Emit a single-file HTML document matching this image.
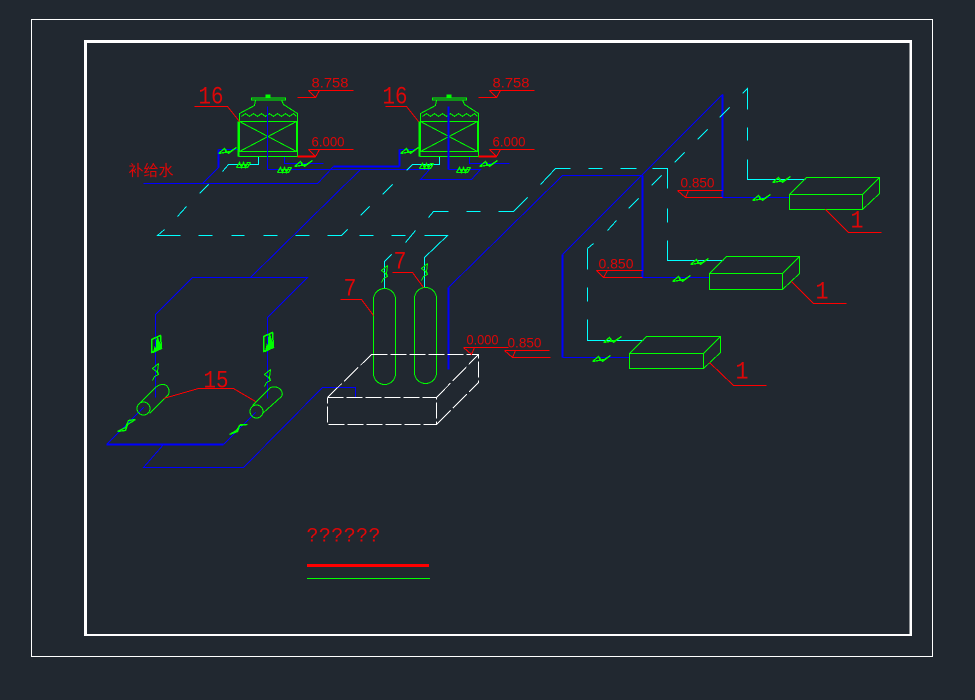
<!DOCTYPE html>
<html>
<head>
<meta charset="utf-8">
<style>
html,body{margin:0;padding:0;background:#212830;width:975px;height:700px;overflow:hidden}
svg{display:block}
text{font-family:"Liberation Mono","Liberation Sans",monospace;fill:#f00}
.n{font-family:"Liberation Sans",sans-serif;font-size:14px;fill-opacity:.85}
.b{font-size:25px;fill-opacity:.85}
.k{stroke:#00f;fill:none}
.t{stroke-width:2}
.c{stroke:#0ff;fill:none}
.g{stroke:#0f0;fill:none}
.r{stroke:#f00;fill:none}
.w{stroke:#fff;fill:none}
</style>
</head>
<body>
<svg width="975" height="700" viewBox="0 0 975 700" xmlns="http://www.w3.org/2000/svg" shape-rendering="crispEdges">
<defs>
<g id="v"><path class="g" stroke-width="1.3" d="M-9 3L-3-2L-1 2L3 1L9-3M-9 3L3 1M-3-2L1 3L9-3"/></g>
<g id="d"><path class="g" stroke-width="1.3" d="M-7 3L-4-2L-2 3L0-2L2 3L4-2L7-2M-7 3L4 3L7-2M-4 0L5 0"/></g>
<g id="tw">
<path class="g" d="M251 97.5H285V99.5H251ZM255 99.5L254 105L239 113V121M281 99.5L283 104L297 113V156"/>
<rect x="265" y="94" width="5" height="3.5" fill="#0f0"/>
<path class="g" d="M241 116L245 113L249 116L253 113L257 116L261 113L265 116L269 113L273 116L277 113L281 116L285 113L289 116L293 113L296 116"/>
<path class="g" d="M239 121H296V151H239ZM239 121L296 151M296 121L239 151"/>
<path class="g" d="M238 121V156" stroke-width="2"/>
<path class="g" d="M238 156H297M238 151H297"/>
</g>
<g id="cv"><path class="g" d="M3 0L-3 5L1 8L3 11L-1 13L-3 17M3 0L2 8L3 11"/></g>
</defs>

<rect x="31.5" y="19.5" width="901" height="637" fill="none" stroke="#fff"/>
<rect x="84" y="40" width="828" height="3" fill="#fff"/>
<rect x="84" y="634" width="828" height="2" fill="#fff"/>
<rect x="84" y="40" width="3" height="596" fill="#fff"/>
<rect x="909.5" y="40" width="2.5" height="596" fill="#fff"/>

<g transform="translate(.5 .5)">
<!-- blue pipes -->
<path class="k t" d="M448 287V369M642 175V277M722 94V197M562 254V357M333 166H399M399 166V149M218 149V167M106 444H223"/>
<path class="k" d="M143 183H317L333 166M218 167L202 183M218 149H239M399 149H416M267 169H429L420 179H471L480 169H448M284 156V163H323M469 156V163H509"/>
<path class="k" d="M360 169L250 277M192 277H307L267 317V398M192 277L155 314V397M106 444L143 407M223 444L255 412"/>
<path class="k" d="M163 444L143 467H243L322 387H355V397"/>
<path class="k" d="M722 94L562 254M642 175H562L448 287M642 277H709M722 197H789M562 357H629"/>

<!-- cyan pipes -->
<path class="c" d="M258 156V164H228L222 171M208 184L199 193M186 206L177 216M164 229L157 235H180M198 235H212M231 235H244M263 235H277M295 235H309M327 235H341L347 229M359 235H373M391 235H405M405 242L415 230M424 235H447L424 257V287M391 254L384 261V288"/>
<path class="c" d="M439 156V164H412L406 170M382 194L392 184M360 215L369 206"/>
<path class="c" d="M428 217L433 211H448M466 211H480M498 211H513L527 197M540 184L555 168H570M588 168H602M620 168H636M652 168H667V188M667 208V222M667 240V260H723"/>
<path class="c" d="M651 185L661 175M674 162L684 152M697 139L707 129M719 117L729 107M742 93L747 88V109M747 127V140M747 159V179H805"/>
<path class="c" d="M628 208L638 198M607 230L616 220M587 248L593 243M587 248V269M587 287V301M587 319V340H643"/>

<!-- towers -->
<use href="#tw"/>
<use href="#tw" x="181"/>
<path class="k" d="M267 106V169"/>
<path class="k t" d="M448 106V169"/>

<!-- valves -->
<use href="#v" x="227" y="150"/><use href="#d" x="243" y="164"/><use href="#v" x="303" y="163"/><use href="#d" x="284" y="169"/>
<use href="#v" x="409" y="150"/><use href="#d" x="426" y="165"/><use href="#v" x="488" y="163"/><use href="#d" x="463" y="169"/>
<use href="#v" x="781" y="179"/><use href="#v" x="761" y="197"/><use href="#v" x="699" y="261"/><use href="#v" x="681" y="278"/><use href="#v" x="612" y="339"/><use href="#v" x="601" y="358"/>
<path class="g" stroke-width="1.3" d="M117 431L125 430L127 424L135 419L128 420L125 427ZM229 434L237 431L239 425L247 424L240 424L236 430Z"/>

<!-- tower labels -->
<text class="b" x="198" y="103" textLength="25" lengthAdjust="spacingAndGlyphs">16</text>
<text class="b" x="382" y="103" textLength="25" lengthAdjust="spacingAndGlyphs">16</text>
<text class="n" x="311" y="87" textLength="37" lengthAdjust="spacingAndGlyphs">8.758</text>
<text class="n" x="492" y="87" textLength="37" lengthAdjust="spacingAndGlyphs">8.758</text>
<text class="n" x="311" y="146" textLength="33" lengthAdjust="spacingAndGlyphs">6.000</text>
<text class="n" x="492" y="146" textLength="33" lengthAdjust="spacingAndGlyphs">6.000</text>
<path class="r" d="M194 106H227L239 121M385 106H406L418 121"/>
<path class="r" d="M297 97H315L308 90M319 90L315 97M308 90H353M478 97H496L489 90M500 90L496 97M489 90H534"/>
<path class="r" d="M308 149L315 156L319 149M308 149H353M489 149L496 156L500 149M489 149H534"/>
<path class="r t" d="M297 156H315M478 156H496"/>
<text x="128" y="175" style="font-family:'Noto Sans CJK SC',sans-serif;font-size:15px;fill-opacity:.85" textLength="45" lengthAdjust="spacing">补给水</text>

<!-- pumps -->
<circle class="g" cx="143" cy="408" r="6.5"/>
<path class="g" d="M138 404L155 387Q161 382 166 385Q170 389 168 394L149 413"/>
<circle class="g" cx="256" cy="411" r="6.5"/>
<path class="g" d="M252 405L270 387Q276 385 280 389Q283 393 281 396L262 413"/>
<path class="r" d="M163 398L198 388H233L255 401"/>
<text class="b" x="203" y="387" textLength="25" lengthAdjust="spacingAndGlyphs">15</text>
<use href="#cv" x="155" y="363"/>
<use href="#cv" x="267" y="369"/>
<path class="g" stroke-width="1.5" d="M151 339L160 335L161 348L151 352Z"/>
<path d="M157 337L153 352L161 348Z" fill="#0f0" stroke="#0f0"/>
<path d="M269 333L265 351L273 347Z" fill="#0f0" stroke="#0f0"/>
<path class="g" stroke-width="1.5" d="M263 336L272 332L273 347L263 351Z"/>
<path class="k" d="M155 341V347M267 337V344"/>

<!-- tanks -->
<rect class="g" x="373" y="288" width="22" height="96" rx="11" ry="11"/>
<rect class="g" x="414" y="287" width="22" height="96" rx="11" ry="11"/>
<use href="#cv" x="384" y="265"/>
<use href="#cv" x="424" y="263"/>
<text class="b" x="343" y="295" textLength="13" lengthAdjust="spacingAndGlyphs">7</text>
<text class="b" x="393" y="268" textLength="13" lengthAdjust="spacingAndGlyphs">7</text>
<path class="r" d="M340 299H361L373 315M392 272H412L423 287"/>

<!-- white dashed base -->
<path class="w" stroke-dasharray="16 3" d="M371 354H478V382M327 397H436V424H327V397"/>
<path class="w" stroke-dasharray="20 3" d="M327 397L371 354M436 397L478 354M436 424L478 382"/>

<!-- elevation labels -->
<text class="n" x="466" y="344" textLength="32" lengthAdjust="spacingAndGlyphs">0.000</text>
<path class="r" d="M463 347H508M463 347L471 354L474 347"/>
<text class="n" x="507" y="347" textLength="34" lengthAdjust="spacingAndGlyphs">0.850</text>
<path class="r" d="M504 350H549M504 350L512 357H550M512 357L515 350"/>
<text class="n" x="680" y="187" textLength="34" lengthAdjust="spacingAndGlyphs">0.850</text>
<path class="r" d="M677 190H722M677 190L685 197H722M685 197L688 190"/>
<text class="n" x="598" y="268" textLength="35" lengthAdjust="spacingAndGlyphs">0.850</text>
<path class="r" d="M596 270H642M596 270L603 277H642M603 277L607 270"/>

<!-- green units -->
<path class="g" d="M789 194H862V209H789ZM789 194L806 177H879V193L862 209M862 194L879 177"/>
<path class="r" d="M825 209L848 232H881"/>
<text class="b" x="850" y="227" textLength="13" lengthAdjust="spacingAndGlyphs">1</text>
<path class="g" d="M709 273H782V289H709ZM709 273L726 256H799V273L782 289M782 273L799 256"/>
<path class="r" d="M791 281L813 303H846"/>
<text class="b" x="815" y="298" textLength="13" lengthAdjust="spacingAndGlyphs">1</text>
<path class="g" d="M629 353H703V368H629ZM629 353L646 336H720V352L703 368M703 353L720 336"/>
<path class="r" d="M709 362L733 385H766"/>
<text class="b" x="735" y="378" textLength="13" lengthAdjust="spacingAndGlyphs">1</text>

<!-- legend -->
<text x="306" y="541" style="font-size:20px;fill-opacity:.85" textLength="74" lengthAdjust="spacing">??????</text>
</g>
<rect x="307" y="564" width="122" height="3" fill="#f00"/>
<rect x="307" y="578" width="123" height="1" fill="#0f0"/>
</svg>
</body>
</html>
